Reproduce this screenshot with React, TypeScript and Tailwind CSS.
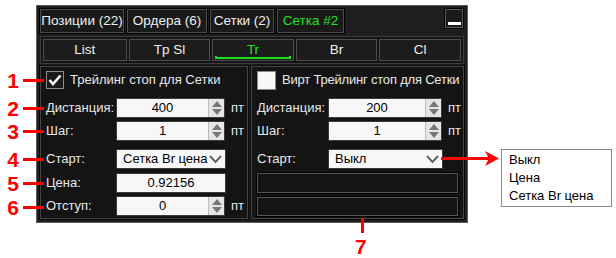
import React from 'react'

const font = { fontFamily: '"Liberation Sans", Arial, sans-serif' }

function Spin() {
  return (
    <div className="flex h-full w-[16px] shrink-0 flex-col items-center justify-center gap-[2px] border-l border-[#bdbdbd] bg-[#e6e6e6]">
      <svg width="10" height="6" viewBox="0 0 10 6"><path d="M0 6 L5 0 L10 6 Z" fill="#777" /></svg>
      <svg width="10" height="6" viewBox="0 0 10 6"><path d="M0 0 L5 6 L10 0 Z" fill="#777" /></svg>
    </div>
  )
}

function NumInput({ value, width, unit = true }: { value: string; width: string; unit?: boolean }) {
  return (
    <div className="flex items-center">
      <div className={`flex h-[20px] ${width} items-stretch border border-[#3a3a3a] bg-[#f7f7f7]`}>
        <div className="flex flex-1 items-center justify-center text-[13px] text-black">{value}</div>
        <Spin />
      </div>
      {unit && <span className="ml-[6px] text-[13px] text-[#e8e8e8]">пт</span>}
    </div>
  )
}

function Select({ value, width }: { value: string; width: string }) {
  return (
    <div className={`flex h-[20px] ${width} items-center border border-[#3a3a3a] bg-[#f7f7f7] pl-[6px] pr-[3px]`}>
      <span className="flex-1 whitespace-nowrap text-[13px] text-black">{value}</span>
      <svg width="13" height="9" viewBox="0 0 13 9"><path d="M1 1 L6.5 7 L12 1" fill="none" stroke="#666" strokeWidth="2" /></svg>
    </div>
  )
}

function Row({ label, children, labelW, className = '' }: { label: string; children: React.ReactNode; labelW: string; className?: string }) {
  return (
    <div className={`flex h-[20px] items-center ${className}`}>
      <span className={`${labelW} shrink-0 text-[13px] text-[#e8e8e8]`}>{label}</span>
      {children}
    </div>
  )
}

function Tab({ label, active, w }: { label: string; active?: boolean; w: string }) {
  return (
    <div className={`flex h-[24px] ${w} items-center justify-center border border-[#4d4d4d] bg-[#1a1a1a] text-[13.5px] outline outline-1 outline-black ${active ? 'text-[#22e01e]' : 'text-[#efefef]'}`}>
      {label}
    </div>
  )
}

function SubTab({ label, active, w }: { label: string; active?: boolean; w: string }) {
  return (
    <div className={`relative flex h-[22px] ${w} items-center justify-center border border-[#4d4d4d] bg-[#1c1c1c] text-[13.5px] ${active ? 'text-[#22e01e]' : 'text-[#efefef]'}`}>
      {label}
      {active && (
        <div className="absolute bottom-[1px] left-[2px] right-[2px] h-[3px] border-x-2 border-b-2 border-[#22e01e]" />
      )}
    </div>
  )
}

function Marker({ n, top }: { n: string; top: number }) {
  return (
    <div className="absolute left-[6px] flex items-center" style={{ top }}>
      <span className="w-[14px] text-center text-[21px] font-bold leading-none text-[#f00]">{n}</span>
      <div className="ml-[3px] h-[3px] w-[21px] bg-[#f00]" />
    </div>
  )
}

export default function App() {
  return (
    <div className="relative h-[258px] w-[616px] overflow-hidden bg-white" style={font}>
      <div className="flex pl-[36px] pt-[5px]">
        <div className="flex h-[218px] w-[432px] flex-col border border-[#5c5c5c] bg-[#1e1e1e] px-[3px] pt-[2px]">
          <div className="flex items-start">
            <div className="flex gap-[3px] pt-[1px]">
              <Tab label="Позиции (22)" w="w-[84px]" />
              <Tab label="Ордера (6)" w="w-[80px]" />
              <Tab label="Сетки (2)" w="w-[64px]" />
              <Tab label="Сетка #2" w="w-[67px]" active />
            </div>
            <div className="ml-auto mr-[1px] mt-[1px] flex h-[19px] w-[18px] items-end justify-center border border-[#5a5a5a] bg-[#1a1a1a] pb-[2px] outline outline-1 outline-black">
              <div className="h-[3px] w-[13px] bg-white" />
            </div>
          </div>
          <div className="mt-[3px] flex h-[28px] items-center gap-[2px] border border-[#3c3c3c] bg-[#151515] px-[2px]">
            <SubTab label="List" w="w-[84px]" />
            <SubTab label="Tp Sl" w="w-[82px]" />
            <SubTab label="Tr" w="w-[82px]" active />
            <SubTab label="Br" w="w-[82px]" />
            <SubTab label="Cl" w="w-[82px]" />
          </div>
          <div className="mt-[2px] flex flex-1 gap-[3px] pb-[3px]">
            <div className="flex w-[208px] flex-col border border-[#444] bg-[#141414] pl-[5px] pt-[3px] outline outline-1 outline-[#0a0a0a]">
              <div className="flex h-[20px] items-center">
                <div className="flex h-[18px] w-[18px] items-center justify-center border border-[#8a8a8a] bg-[#1a1a1a]">
                  <svg width="14" height="12" viewBox="0 0 14 12"><path d="M1.5 6 L5 10 L12.5 1.5" fill="none" stroke="white" strokeWidth="2.6" /></svg>
                </div>
                <span className="ml-[6px] whitespace-nowrap text-[13px] text-[#e8e8e8]">Трейлинг стоп для Сетки</span>
              </div>
              <Row label="Дистанция:" labelW="w-[70px]" className="mt-[8px]"><NumInput value="400" width="w-[109px]" /></Row>
              <Row label="Шаг:" labelW="w-[70px]" className="mt-[3px]"><NumInput value="1" width="w-[109px]" /></Row>
              <Row label="Старт:" labelW="w-[70px]" className="mt-[8px]"><Select value="Сетка Br цена" width="w-[110px]" /></Row>
              <Row label="Цена:" labelW="w-[70px]" className="mt-[4px]">
                <div className="flex h-[20px] w-[110px] items-center justify-center border border-[#3a3a3a] bg-[#f7f7f7] text-[13px] text-black">0.92156</div>
              </Row>
              <Row label="Отступ:" labelW="w-[70px]" className="mt-[3px]"><NumInput value="0" width="w-[109px]" /></Row>
            </div>
            <div className="flex min-w-0 flex-1 flex-col border border-[#444] bg-[#141414] pl-[5px] pt-[3px] outline outline-1 outline-[#0a0a0a]">
              <div className="flex h-[20px] items-center">
                <div className="h-[19px] w-[19px] shrink-0 border border-[#8a8a8a] bg-[#f7f7f7]" />
                <span className="ml-[6px] whitespace-nowrap text-[13px] tracking-[-0.2px] text-[#e8e8e8]">Вирт Трейлинг стоп для Сетки</span>
              </div>
              <Row label="Дистанция:" labelW="w-[71px]" className="mt-[8px]"><NumInput value="200" width="w-[114px]" /></Row>
              <Row label="Шаг:" labelW="w-[71px]" className="mt-[3px]"><NumInput value="1" width="w-[114px]" /></Row>
              <Row label="Старт:" labelW="w-[71px]" className="mt-[8px]"><Select value="Выкл" width="w-[115px]" /></Row>
              <div className="mr-[5px] mt-[4px] h-[20px] border border-[#555] bg-[#141414] outline outline-1 outline-black" />
              <div className="mr-[5px] mt-[4px] h-[19px] border border-[#555] bg-[#141414] outline outline-1 outline-black" />
            </div>
          </div>
        </div>
      </div>

      <Marker n="1" top={70} />
      <Marker n="2" top={98} />
      <Marker n="3" top={121} />
      <Marker n="4" top={149} />
      <Marker n="5" top={173} />
      <Marker n="6" top={197} />

      <div className="absolute left-[361px] top-[218px] h-[15px] w-[3px] bg-[#f00]" />
      <span className="absolute left-[355px] top-[236px] text-[21px] font-bold leading-none text-[#f00]">7</span>

      <svg className="absolute left-[441px] top-[150px]" width="60" height="18" viewBox="0 0 60 18">
        <path d="M0 8.5 H52" stroke="#f00" strokeWidth="3" />
        <path d="M44 1 L58 8.5 L44 16 L48 8.5 Z" fill="#f00" />
      </svg>

      <div className="absolute left-[501px] top-[149px] w-[111px] border border-[#8a8a8a] bg-white py-[1px] pl-[7px] text-[13px] leading-[18px] text-black">
        <div>Выкл</div>
        <div>Цена</div>
        <div>Сетка Br цена</div>
      </div>
    </div>
  )
}
